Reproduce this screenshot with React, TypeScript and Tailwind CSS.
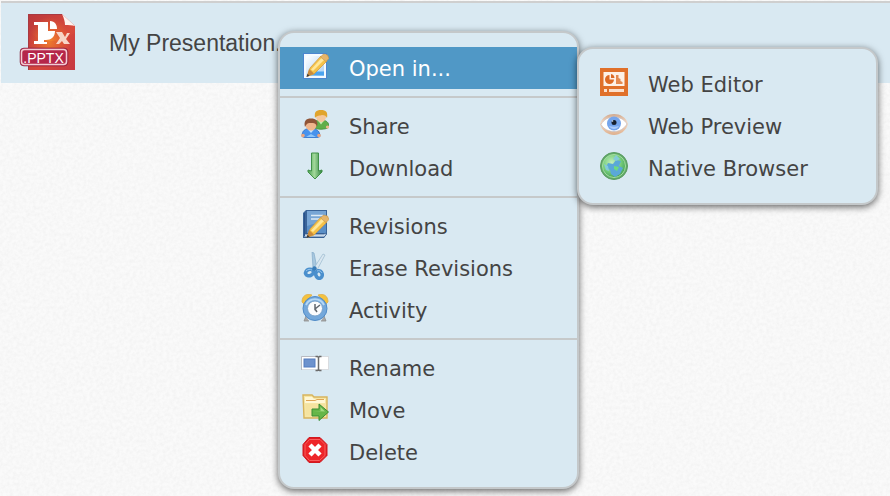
import type { ReactNode } from 'react'

function PptxIcon() {
  return (
    <svg viewBox="0 0 57 57" className="mb-0.5 size-[57px] shrink-0" aria-hidden="true">
      <defs>
        <linearGradient id="pptxPage" x1="0" y1="0" x2="1" y2="1">
          <stop offset="0" stopColor="#b9383c" />
          <stop offset="0.3" stopColor="#c9403c" />
          <stop offset="0.6" stopColor="#d94a3c" />
          <stop offset="1" stopColor="#c53a44" />
        </linearGradient>
        <radialGradient id="pptxGlow" cx="0.45" cy="0.5" r="0.45">
          <stop offset="0" stopColor="#f58a2c" />
          <stop offset="1" stopColor="#f0762a" stopOpacity="0" />
        </radialGradient>
      </defs>
      <path d="M9 0h34l13 12v44H9z" fill="url(#pptxPage)" />
      <path d="M9 0h34l13 12v44H9z" fill="url(#pptxGlow)" />
      <path d="M9 18c8 4 12 10 24 9 10 0 17-5 23-8v37H9z" fill="#c8303c" opacity="0.18" />
      <path d="M43 0c2 4 3 8 3 11 4 0 7 0 10 1z" fill="#fdf3f0" />
      <path d="M9.500 56V0.500H43" fill="none" stroke="#a83a42" />
      <path
        d="M15 8h14v9h7c0 6-4 9-9 9h-2v2h3v-1 3H15v-3h4V11h-4z"
        fill="#fff"
      />
      <path d="M31 7c5 0 7 4 7 8h-7z" fill="#fff" />
      <path d="M37 18h6l3 5 2-4h3l-4 6 4 5h-6l-2-3-3 3h-3l4-6z" fill="#f7d5c8" />
      <rect x="1" y="34" width="48" height="18" rx="4" fill="#b5264a" stroke="#7e2238" strokeOpacity="0.5" />
      <rect x="2.500" y="35.500" width="45" height="15" rx="3" fill="none" stroke="#f3ccd2" strokeWidth="1.500" />
      <text
        x="24.500"
        y="48.500"
        textAnchor="middle"
        fontFamily="Liberation Sans, Arial, sans-serif"
        fontSize="14"
        fill="#fff"
      >
        .PPTX
      </text>
    </svg>
  )
}

function PencilPath() {
  return (
    <>
      <path d="M7 24l2-8L20 4l6 5-13 13z" fill="#f5c249" stroke="#d09c45" strokeWidth="0.800" />
      <path d="M10 17.500L21 5.500l2.500 2L12 19z" fill="#ffe79a" />
      <path d="M19.500 5l3-3 4 1 1.500 3.500-3 3z" fill="#e6b56a" stroke="#c69445" strokeWidth="0.600" />
      <path d="M5.500 25l2.500-8 5 4.500z" fill="#c98a3c" />
      <path d="M5.500 25l1-3.200 2 2z" fill="#3c3c3c" />
    </>
  )
}

function OpenIcon() {
  return (
    <>
      <defs>
        <linearGradient id="openSheet" x1="0" y1="0" x2="1" y2="1">
          <stop offset="0" stopColor="#ffffff" />
          <stop offset="1" stopColor="#a9d0f4" />
        </linearGradient>
      </defs>
      <rect x="2.500" y="1.500" width="23" height="25" fill="#f4faff" stroke="#4b86cf" />
      <rect x="5" y="4" width="18" height="20" fill="url(#openSheet)" />
      <path d="M13 19.500h10v4H9z" fill="#4ba3ee" />
      <PencilPath />
    </>
  )
}

function ShareIcon() {
  return (
    <>
      <path d="M12 17c0-6 3-7 8-7s8 2 8 7c-3 3-13 3-16 0z" fill="#5fae49" stroke="#3d8a35" strokeWidth="0.800" />
      <path d="M17 10.500l3 4 3-4z" fill="#c7ebb5" />
      <circle cx="26.500" cy="17" r="1.600" fill="#efb98c" />
      <ellipse cx="20" cy="6.500" rx="5" ry="5.500" fill="#f5c79b" />
      <path d="M14 8c-1-6 1-8 6-8s7 2 6 8c-1-2-2-3-5-3-2 1-5 0-7 3z" fill="#e0a42c" />
      <path d="M1 26.500c0-6 3-8 8.500-8s9.500 2 9.500 8c-3 2-15 2-18 0z" fill="#4892ec" stroke="#2e69bf" strokeWidth="0.800" />
      <path d="M6.500 19l3.500 4 3.500-4z" fill="#c5e2fc" />
      <path d="M5 27l5-3 5 3z" fill="#8ec6fa" />
      <circle cx="2" cy="25.500" r="1.800" fill="#efa67c" />
      <circle cx="18" cy="25.500" r="1.800" fill="#efa67c" />
      <ellipse cx="10" cy="15" rx="5.500" ry="5.500" fill="#f0b58b" />
      <path d="M4 17c-1.500-6 1-8.500 6-8.500s7.500 2.500 6 8.500c-1-4-3-4-6-4s-4 0-6 4z" fill="#8f5436" />
    </>
  )
}

function DownloadIcon() {
  return (
    <>
      <defs>
        <linearGradient id="downArrow">
          <stop offset="0" stopColor="#4aa052" />
          <stop offset="0.450" stopColor="#a3d99b" />
          <stop offset="1" stopColor="#2f8440" />
        </linearGradient>
      </defs>
      <path d="M10.500 1h7v18l3.500-1v2l-7 7-7-7v-2l3.500 1z" fill="url(#downArrow)" stroke="#429149" strokeLinejoin="round" />
    </>
  )
}

function RevisionsIcon() {
  return (
    <>
      <path d="M2 3l3-3h21v24l-3 4H2z" fill="#3a6499" />
      <path d="M6 1h19v22H6z" fill="#5b8fc6" />
      <path d="M6 1h19v9L6 16z" fill="#77a5d5" />
      <path d="M3 24h20l2-1v2l-2 2H3z" fill="#c9d9ea" stroke="#31598c" strokeWidth="0.700" />
      <path d="M10 5.500h12M10 9h9" stroke="#dce9f5" strokeWidth="1.400" />
      <path d="M3.500 3v23" stroke="#29518a" />
      <g transform="translate(0 3)">
        <PencilPath />
      </g>
    </>
  )
}

function EraseIcon() {
  return (
    <>
      <path d="M11 0l2 1 3 15h-4z" fill="#a9c8df" stroke="#7ba4c4" strokeWidth="0.600" />
      <path d="M22 2l2 1-8 15-3-2z" fill="#dae7f0" stroke="#8fb1ca" strokeWidth="0.600" />
      <ellipse cx="8.500" cy="20.500" rx="4" ry="3.200" fill="none" stroke="#4a8fcd" strokeWidth="3.600" transform="rotate(-20 8.500 20.500)" />
      <ellipse cx="18" cy="22.500" rx="3.200" ry="3.800" fill="none" stroke="#4a8fcd" strokeWidth="3.600" transform="rotate(-15 18 22.500)" />
      <path d="M5 19c2-2 4-2 6-1M16 19c2-1 4 0 5 2" fill="none" stroke="#93c3eb" />
      <circle cx="13.500" cy="16.500" r="2.200" fill="#397cb8" />
    </>
  )
}

function ActivityIcon() {
  return (
    <>
      <path d="M5 22l-2 5h5M23 22l2 5h-5" fill="#aaa9a8" stroke="#8b8b8b" strokeWidth="0.800" />
      <path d="M1 8c0-6 4-9 10-7L3 10zM27 8c0-6-4-9-10-7l8 9z" fill="#f4c23f" stroke="#e0ad45" strokeWidth="0.800" />
      <circle cx="14" cy="14.500" r="12" fill="#74a8db" stroke="#4f8ac6" />
      <path d="M5 11a10 10 0 0 1 18 0" fill="none" stroke="#b6d8f4" strokeWidth="2" />
      <circle cx="14" cy="14.500" r="7.500" fill="#fbfcfd" stroke="#7ba4cc" />
      <path d="M14 10v5l5-4M14 15l2 3" fill="none" stroke="#61676e" strokeWidth="1.500" />
    </>
  )
}

function RenameIcon() {
  return (
    <>
      <rect x="0.500" y="4.500" width="27" height="13" fill="#fff" stroke="#d9dce0" />
      <path d="M0.500 18V4.500H16" fill="none" stroke="#b8bbc2" />
      <rect x="3" y="7" width="11" height="8" fill="#6d92cd" stroke="#547dc0" />
      <path d="M14.500 4.500h2l1 1 1-1h2M17.500 5v13M14.500 18.500h2l1-1 1 1h2" fill="none" stroke="#6c6c6c" strokeWidth="1.500" />
    </>
  )
}

function MoveIcon() {
  return (
    <>
      <path d="M2 1h9l2 2h13v21H3z" fill="#f6e6a5" stroke="#d7b45d" strokeWidth="1.400" />
      <path d="M4 3h7l2 2h11v4H4z" fill="#fff7d5" />
      <path d="M5 6.500h9l2-1h7" fill="none" stroke="#dfa657" />
      <path d="M5 10h19v11H5z" fill="#f5e3a0" />
      <path d="M11 15h7v-5l9.500 8-9.500 8.500V22h-7z" fill="#66b648" stroke="#3b8d35" strokeLinejoin="round" />
      <path d="M12.500 17h7v-4l4.500 4.500z" fill="#a4dc82" />
    </>
  )
}

function DeleteIcon() {
  return (
    <>
      <path d="M8 1.500h11l7 7v11l-7 7H8l-6-7v-11z" fill="#e01b22" stroke="#d11a20" />
      <path d="M8.500 3.500h10.500L24 8.500v11L18.500 24.500h-10L4 19.500v-11z" fill="#ee2529" stroke="#f9605f" />
      <path d="M9 9l10 10M19 9L9 19" stroke="#fff" strokeWidth="4.500" />
    </>
  )
}

function EditorIcon() {
  return (
    <>
      <path d="M0 0h28v28H0z" fill="#e0702a" />
      <path d="M3.500 4h21v14h-21z" fill="#fdf1e7" />
      <path d="M9.500 7v4.500H14A4.500 4.500 0 1 1 9.500 7z" fill="#dd6a25" />
      <path d="M11 6a4.500 4.500 0 0 1 3.500 4H11z" fill="#dd6a25" />
      <path d="M16 7h2.500v3l2 1v2l2 1v2H16z" fill="#e58a50" />
      <path d="M4 21h3v3H4zM9 21h15v3H9z" fill="#fbe0cc" />
    </>
  )
}

function EyeIcon() {
  return (
    <>
      <defs>
        <linearGradient id="eyeLid" x1="0" y1="0" x2="0" y2="1">
          <stop offset="0" stopColor="#cfa88e" />
          <stop offset="0.400" stopColor="#f7dac3" />
          <stop offset="1" stopColor="#deb08e" />
        </linearGradient>
      </defs>
      <path d="M0 14C2 7 8 4 14 4s12 3 14 10c-2 7-8 11-14 11S2 21 0 14z" fill="url(#eyeLid)" />
      <path d="M1 14.500C4 9 9 7 14 7s10 2 13 7c-3 5-8 7.500-13 7.500s-10-2-13-7z" fill="#fff" stroke="#c3bcbd" strokeWidth="0.700" />
      <circle cx="14" cy="13.500" r="7" fill="#75a5ec" />
      <path d="M9 16c2 4 8 4 10 0-3 1-7 1-10 0z" fill="#aacbfa" />
      <circle cx="14" cy="12.500" r="2.500" fill="#17202c" />
      <circle cx="12.500" cy="11" r="0.800" fill="#dbe8fb" />
    </>
  )
}

function GlobeIcon() {
  return (
    <>
      <defs>
        <radialGradient id="globeSea" cx="0.400" cy="0.350" r="0.650">
          <stop offset="0" stopColor="#c3eebc" />
          <stop offset="0.600" stopColor="#79cf7d" />
          <stop offset="1" stopColor="#4aa65a" />
        </radialGradient>
      </defs>
      <circle cx="14" cy="14" r="13.500" fill="#60a968" stroke="#5b9c62" />
      <circle cx="14" cy="14" r="11.500" fill="url(#globeSea)" stroke="#a5dda0" />
      <path d="M8 11l5 1 3-4 5 1-2 5 4 2-3 6-5 3-4-3-1-4-4-3z" fill="#5aa8d8" />
      <path d="M16 3l4 4-4 2-3-2zM4 12l4 2 1 5-3-1z" fill="#83cbd8" />
      <path d="M14 14l5 1-2 4-3-2z" fill="#6ddb80" />
    </>
  )
}

interface Item {
  label: string
  icon: ReactNode
  children?: Item[]
}

const sections: Item[][] = [
  [
    {
      label: 'Open in...',
      icon: <OpenIcon />,
      children: [
        { label: 'Web Editor', icon: <EditorIcon /> },
        { label: 'Web Preview', icon: <EyeIcon /> },
        { label: 'Native Browser', icon: <GlobeIcon /> },
      ],
    },
  ],
  [
    { label: 'Share', icon: <ShareIcon /> },
    { label: 'Download', icon: <DownloadIcon /> },
  ],
  [
    { label: 'Revisions', icon: <RevisionsIcon /> },
    { label: 'Erase Revisions', icon: <EraseIcon /> },
    { label: 'Activity', icon: <ActivityIcon /> },
  ],
  [
    { label: 'Rename', icon: <RenameIcon /> },
    { label: 'Move', icon: <MoveIcon /> },
    { label: 'Delete', icon: <DeleteIcon /> },
  ],
]

const panel =
  'w-[301px] rounded-2xl border-2 border-[#c4c8ca] bg-[#d9e9f2] py-3.5 shadow-[0_2px_7px_rgba(0,0,0,0.6)]'

function MenuItem({ item }: { item: Item }) {
  const open = !!item.children

  return (
    <li className="relative">
      <button
        type="button"
        aria-expanded={open ? true : undefined}
        className={`flex h-[42px] w-full items-center gap-5 pt-0.5 pl-[21px] text-left text-[21px] leading-7 ${
          open ? 'bg-[#5098c6] text-white' : 'text-[#444]'
        }`}
      >
        <svg viewBox="0 0 28 28" className="mb-1.5 size-7 shrink-0" aria-hidden="true">
          {item.icon}
        </svg>
        <span>{item.label}</span>
      </button>
      {item.children && (
        <ul className={`absolute top-0 left-full ${panel}`}>
          {item.children.map((child) => (
            <MenuItem key={child.label} item={child} />
          ))}
        </ul>
      )}
    </li>
  )
}

export default function App() {
  return (
    <main className="relative min-h-screen overflow-hidden bg-[#fafafa] font-['DejaVu_Sans',Verdana,sans-serif]">
      {/* paper grain */}
      <svg className="absolute inset-0 size-full" aria-hidden="true">
        <filter id="grain">
          <feTurbulence type="fractalNoise" baseFrequency="0.3" numOctaves="3" />
          <feColorMatrix values="0 0 0 0 0.500  0 0 0 0 0.500  0 0 0 0 0.500  0.200 0 0 0 -0.060" />
        </filter>
        <rect width="100%" height="100%" filter="url(#grain)" />
      </svg>

      <div className="relative pt-px pl-px">
        <div className="flex h-[82px] items-center gap-[33px] border-t-2 border-[#cfcfcf] bg-[#d9e9f2] pl-[18px]">
          <PptxIcon />
          <a href="#file" className="font-['Liberation_Sans',Arial,sans-serif] text-[23px] text-[#444]">
            My Presentation.pptx
          </a>
        </div>
      </div>

      <nav aria-label="File actions" className={`absolute top-[31px] left-[278px] ${panel}`}>
        {sections.map((items, i) => (
          <ul key={i} className={i > 0 ? 'mt-[7px] border-t-2 border-[#c6c9ca] pt-[7px]' : undefined}>
            {items.map((item) => (
              <MenuItem key={item.label} item={item} />
            ))}
          </ul>
        ))}
      </nav>
    </main>
  )
}
